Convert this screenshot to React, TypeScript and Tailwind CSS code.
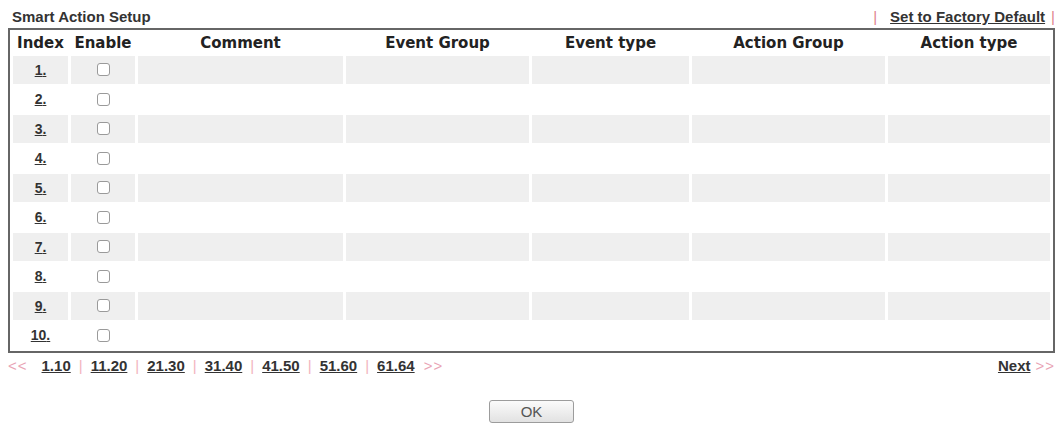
import React from 'react'

const columns = [
  { label: 'Index', width: 'w-[55px]' },
  { label: 'Enable', width: 'w-[64px]' },
  { label: 'Comment', width: 'w-[205px]' },
  { label: 'Event Group', width: 'w-[183px]' },
  { label: 'Event type', width: 'w-[157px]' },
  { label: 'Action Group', width: 'w-[193px]' },
  { label: 'Action type', width: 'w-auto' },
]

const pages = ['1.10', '11.20', '21.30', '31.40', '41.50', '51.60', '61.64']

const rows = Array.from({ length: 10 }, (_, i) => i + 1)

function Pipe({ className = '' }: { className?: string }) {
  return <span className={`text-[#f2b3be] font-normal ${className}`}>|</span>
}

export default function App() {
  return (
    <div className="w-[1059px] h-[423px] bg-white overflow-hidden font-['Liberation_Sans',Arial,sans-serif] text-[#333]">
      <div className="pl-[8px] pr-[4px]">
        {/* title bar */}
        <div className="flex items-end justify-between h-[28px] pb-[4px]">
          <span className="pl-[4px] text-[15px] font-bold leading-none">Smart Action Setup</span>
          <div className="flex items-center text-[15px] font-bold leading-none">
            <span className="text-[#e07f8d] font-normal mr-[13px]">|</span>
            <a className="underline text-[#333]">Set to Factory Default</a>
            <span className="text-[#e07f8d] font-normal ml-[6px]">|</span>
          </div>
        </div>

        {/* rules table */}
        <table className="w-full table-fixed border-separate border-spacing-x-[3px] border-spacing-y-[2px] border-2 border-[#666]">
          <thead>
            <tr className="h-[22px]">
              {columns.map((c) => (
                <th
                  key={c.label}
                  className={`${c.width} p-0 text-center text-[15px] font-bold leading-none text-[#222] font-['DejaVu_Sans',Verdana,sans-serif]`}
                >
                  {c.label}
                </th>
              ))}
            </tr>
          </thead>
          <tbody>
            {rows.map((n) => {
              const shade = n % 2 === 1 ? 'bg-[#efefef]' : 'bg-white'
              return (
                <tr key={n} className="h-[27.5px]">
                  <td className={`${shade} p-0 text-center`}>
                    <a className="text-[14px] font-bold underline text-[#333]">{n}.</a>
                  </td>
                  <td className={`${shade} p-0`}>
                    <div className="flex justify-center">
                      <input
                        type="checkbox"
                        className="appearance-none block w-[13px] h-[13px] border border-[#9a9a9a] rounded-[3px] bg-white"
                      />
                    </div>
                  </td>
                  <td className={`${shade} p-0`} />
                  <td className={`${shade} p-0`} />
                  <td className={`${shade} p-0`} />
                  <td className={`${shade} p-0`} />
                  <td className={`${shade} p-0`} />
                </tr>
              )
            })}
          </tbody>
        </table>

        {/* paging */}
        <div className="flex items-center justify-between mt-[5px] text-[15px] font-bold leading-none">
          <div className="flex items-center">
            <span className="text-[#e9a3b4] font-normal tracking-[1px]">&lt;&lt;</span>
            {pages.map((p, i) => (
              <React.Fragment key={p}>
                {i > 0 && <Pipe className="mx-[8px]" />}
                <a className={`underline text-[#333] ${i === 0 ? 'ml-[14px]' : ''}`}>{p}</a>
              </React.Fragment>
            ))}
            <span className="ml-[9px] text-[#e9a3b4] font-normal tracking-[1px]">&gt;&gt;</span>
          </div>
          <div className="flex items-center">
            <a className="underline text-[#333]">Next</a>
            <span className="ml-[5px] text-[#e9a3b4] font-normal tracking-[1px]">&gt;&gt;</span>
          </div>
        </div>

        <div className="flex justify-center mt-[27px]">
          <button className="w-[85px] h-[23px] border border-[#9c9c9c] rounded-[3px] bg-gradient-to-b from-[#fbfbfb] to-[#e2e2e2] text-[15px] text-[#555] leading-none">
            OK
          </button>
        </div>
      </div>
    </div>
  )
}
